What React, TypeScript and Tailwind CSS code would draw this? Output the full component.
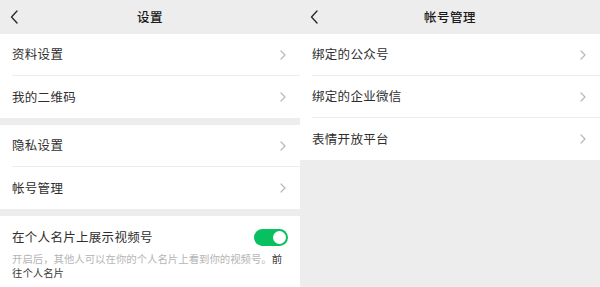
import React from "react";

const font = { fontFamily: '"Noto Sans CJK SC", "Noto Sans", sans-serif' };

function Back() {
  return (
    <svg width="8" height="14" viewBox="0 0 8 14" className="ml-[10px]">
      <polyline points="7,1 1.5,7 7,13" fill="none" stroke="#2b2b2b" strokeWidth="1.4" strokeLinecap="round" strokeLinejoin="round" />
    </svg>
  );
}

function Chevron() {
  return (
    <svg width="6" height="10" viewBox="0 0 6 10">
      <polyline points="1,1 5,5 1,9" fill="none" stroke="#b8b8b8" strokeWidth="1.2" strokeLinecap="round" strokeLinejoin="round" />
    </svg>
  );
}

function Header({ title }: { title: string }) {
  return (
    <div className="h-[34px] grid grid-cols-[40px_1fr_40px] items-center bg-[#ededed] shrink-0">
      <Back />
      <div className="text-center text-[12.5px] font-medium text-[#1a1a1a] tracking-[0.5px]">{title}</div>
      <div />
    </div>
  );
}

function Group({ items }: { items: string[] }) {
  return (
    <div className="bg-white pl-3">
      {items.map((t, i) => (
        <div
          key={t}
          className={
            "h-[42px] flex items-center justify-between pr-[14px] " +
            (i < items.length - 1 ? "border-b border-[#ececec]" : "")
          }
        >
          <span className="text-[12.5px] text-[#2e2e2e] tracking-[0.3px]">{t}</span>
          <Chevron />
        </div>
      ))}
    </div>
  );
}

export default function App() {
  return (
    <div className="w-[600px] h-[287px] flex overflow-hidden bg-[#ededed]" style={font}>
      <div className="w-[300px] flex flex-col">
        <Header title="设置" />
        <Group items={["资料设置", "我的二维码"]} />
        <div className="h-[7px] shrink-0" />
        <Group items={["隐私设置", "帐号管理"]} />
        <div className="h-[7px] shrink-0" />
        <div className="bg-white flex-1 px-3 pt-[12px]">
          <div className="flex items-center justify-between">
            <span className="text-[12.5px] text-[#2e2e2e] tracking-[0.3px]">在个人名片上展示视频号</span>
            <div className="w-[34px] h-[17px] rounded-full bg-[#07c160] flex items-center justify-end pr-[2px]">
              <div className="w-[13px] h-[13px] rounded-full bg-white" />
            </div>
          </div>
          <div className="mt-[5px] text-[10.4px] leading-[14px] text-[#b5b5b5]">
            <div>
              开启后，其他人可以在你的个人名片上看到你的视频号。<span className="text-[#3a3a3a]">前</span>
            </div>
            <div className="text-[#3a3a3a]">往个人名片</div>
          </div>
        </div>
      </div>
      <div className="w-[300px] flex flex-col">
        <Header title="帐号管理" />
        <Group items={["绑定的公众号", "绑定的企业微信", "表情开放平台"]} />
        <div className="flex-1" />
      </div>
    </div>
  );
}
